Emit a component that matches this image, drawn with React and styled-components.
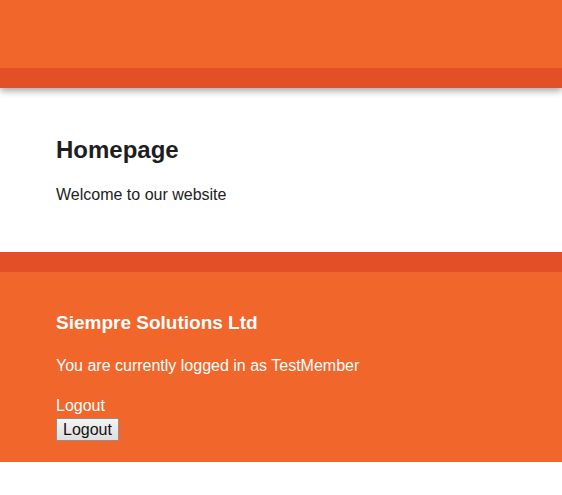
import React from "react";
import styled, { createGlobalStyle } from "styled-components";

const GlobalStyle = createGlobalStyle`
	body {
		margin: 0;
		background: #fff;
		font-family: "Liberation Sans", Arial, sans-serif;
		color: #222;
	}
`;

const Header = styled.header`
	position: relative;
	z-index: 1;
	background: #f1662a;
	border-bottom: 20px solid #e34f27;
	height: 68px;
	box-shadow: 0 3px 7px rgba(0, 0, 0, 0.35);
`;

const Main = styled.main`
	padding: 48px 56px 44px;
	height: 72px;
`;

const Title = styled.h1`
	margin: 0 0 22px;
	font-size: 24px;
	font-weight: bold;
	color: #1e1e1e;
`;

const Text = styled.p`
	margin: ${(p) => p.$margin || "0"};
	font-size: 16px;
`;

const Footer = styled.footer`
	background: #f1662a;
	border-top: 20px solid #e34f27;
	padding: 40px 56px 21px;
	color: #fff;
`;

const Company = styled.h2`
	margin: 0 0 23px;
	font-size: 19px;
	font-weight: bold;
`;

const LogoutForm = styled.form`
	margin: 0;
	display: flex;
	flex-direction: column;
	align-items: flex-start;
	gap: 3px;
`;

const Button = styled.button`
	font-family: "Liberation Sans", Arial, sans-serif;
	font-size: 16px;
	color: #111;
	height: 23px;
	padding: 0 6px;
	border: 1px solid #8f8f8f;
	border-radius: 1px;
	background: linear-gradient(#f4f4f4, #dedede);
`;

export default function App() {
	return (
		<>
			<GlobalStyle />
			<Header />
			<Main>
				<Title>Homepage</Title>
				<Text>Welcome to our website</Text>
			</Main>
			<Footer>
				<Company>Siempre Solutions Ltd</Company>
				<Text $margin="0 0 22px">You are currently logged in as TestMember</Text>
				<LogoutForm onSubmit={(e) => e.preventDefault()}>
					<span>Logout</span>
					<Button type="submit">Logout</Button>
				</LogoutForm>
			</Footer>
		</>
	);
}
